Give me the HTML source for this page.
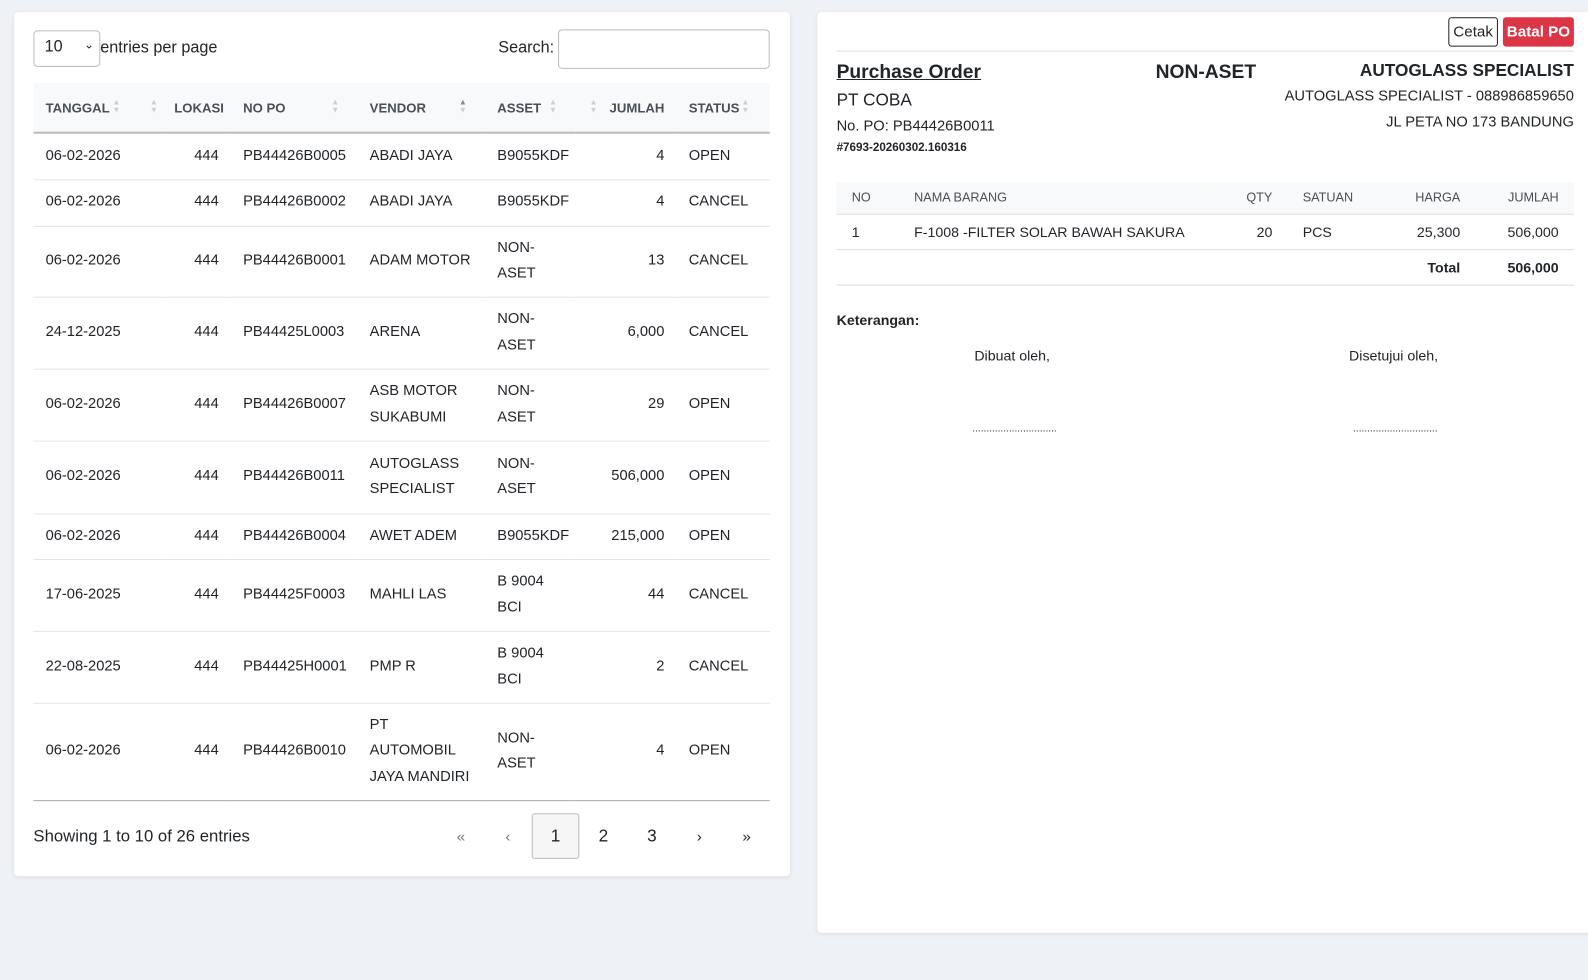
<!DOCTYPE html>
<html><head><meta charset="utf-8"><style>
*{box-sizing:border-box;margin:0;padding:0}
html,body{width:1588px;height:980px;overflow:hidden}
body{background:#eef1f6;font-family:"Liberation Sans",sans-serif;color:#212529;font-size:14.5px}
#w{position:absolute;left:0;top:0;width:1568px;height:968px;transform:scale(1.0128);transform-origin:0 0}
.card{position:absolute;background:#fff;border-radius:4px;box-shadow:0 1px 4px rgba(0,0,0,.08)}
.a{position:absolute;white-space:nowrap}
table.t{position:absolute;left:33px;top:82px;width:727px;border-collapse:collapse;table-layout:fixed}
.t th{height:49px;background:#f8f9fa;color:#495057;font-size:13px;font-weight:bold;text-align:left;padding:0 12px;border-bottom:2px solid #bbb;position:relative}
.t td{padding:0 12px;line-height:25.5px;border-bottom:1px solid #e3e5e8;vertical-align:middle;font-size:14.5px}
.r{text-align:right!important}
.s{position:absolute;top:15px;font-size:8px;line-height:8px;color:#ccd0d4}
.it{position:absolute;left:826px;top:180px;width:728px;border-collapse:collapse;font-size:14px;white-space:nowrap}
.it th{background:#f8f9fa;height:31px;font-size:12.5px;color:#495057;font-weight:normal;text-align:left;padding:0 15px;border-bottom:1px solid #ddd}
.it td{height:35px;padding:0 15px;border-bottom:1px solid #ddd}
</style></head><body><div id="w">
<div class="card" style="left:14px;top:12px;width:766px;height:853px"></div>
<div class="a" style="left:33px;top:30px;width:66px;height:36px;border:1px solid #bbb;border-radius:4px;padding:7px 10px;font-size:16px">10<span style="position:absolute;right:5px;top:6px;font-size:12px">&#8964;</span></div>
<div class="a" style="left:99px;top:39px;font-size:16px">entries per page</div>
<div class="a" style="left:492px;top:39px;font-size:16px">Search:</div>
<div class="a" style="left:551px;top:29px;width:209px;height:39px;border:1px solid #bbb;border-radius:4px"></div>
<table class="t">
<colgroup><col style="width:127px"><col style="width:68px"><col style="width:125px"><col style="width:126px"><col style="width:89px"><col style="width:100px"><col style="width:92px"></colgroup>
<tr><th>TANGGAL<span class="s" style="left:78px">▲<br>▼</span></th><th class="r">LOKASI<span class="s" style="left:-12px">▲<br>▼</span></th><th>NO PO<span class="s" style="right:18px">▲<br>▼</span></th><th>VENDOR<span class="s" style="right:18px"><span style="color:#888">▲</span><br>▼</span></th><th>ASSET<span class="s" style="left:63px">▲<br>▼</span></th><th class="r">JUMLAH<span class="s" style="left:14px">▲<br>▼</span></th><th>STATUS<span class="s" style="left:64px">▲<br>▼</span></th></tr>
<tr style="height:46px"><td>06-02-2026</td><td class="r">444</td><td>PB44426B0005</td><td>ABADI JAYA</td><td>B9055KDF</td><td class="r">4</td><td>OPEN</td></tr>
<tr style="height:46px"><td>06-02-2026</td><td class="r">444</td><td>PB44426B0002</td><td>ABADI JAYA</td><td>B9055KDF</td><td class="r">4</td><td>CANCEL</td></tr>
<tr style="height:70px"><td>06-02-2026</td><td class="r">444</td><td>PB44426B0001</td><td>ADAM MOTOR</td><td>NON-<br>ASET</td><td class="r">13</td><td>CANCEL</td></tr>
<tr style="height:71px"><td>24-12-2025</td><td class="r">444</td><td>PB44425L0003</td><td>ARENA</td><td>NON-<br>ASET</td><td class="r">6,000</td><td>CANCEL</td></tr>
<tr style="height:71px"><td>06-02-2026</td><td class="r">444</td><td>PB44426B0007</td><td>ASB MOTOR<br>SUKABUMI</td><td>NON-<br>ASET</td><td class="r">29</td><td>OPEN</td></tr>
<tr style="height:72px"><td>06-02-2026</td><td class="r">444</td><td>PB44426B0011</td><td>AUTOGLASS<br>SPECIALIST</td><td>NON-<br>ASET</td><td class="r">506,000</td><td>OPEN</td></tr>
<tr style="height:45px"><td>06-02-2026</td><td class="r">444</td><td>PB44426B0004</td><td>AWET ADEM</td><td>B9055KDF</td><td class="r">215,000</td><td>OPEN</td></tr>
<tr style="height:71px"><td>17-06-2025</td><td class="r">444</td><td>PB44425F0003</td><td>MAHLI LAS</td><td>B 9004<br>BCI</td><td class="r">44</td><td>CANCEL</td></tr>
<tr style="height:71px"><td>22-08-2025</td><td class="r">444</td><td>PB44425H0001</td><td>PMP R</td><td>B 9004<br>BCI</td><td class="r">2</td><td>CANCEL</td></tr>
<tr style="height:96px"><td style="border-bottom:1px solid #aaa">06-02-2026</td><td class="r" style="border-bottom:1px solid #aaa">444</td><td style="border-bottom:1px solid #aaa">PB44426B0010</td><td style="border-bottom:1px solid #aaa">PT<br>AUTOMOBIL<br>JAYA MANDIRI</td><td style="border-bottom:1px solid #aaa">NON-<br>ASET</td><td class="r" style="border-bottom:1px solid #aaa">4</td><td style="border-bottom:1px solid #aaa">OPEN</td></tr>
</table>
<div class="a" style="left:33px;top:817px;font-size:16.5px">Showing 1 to 10 of 26 entries</div>
<div class="a" style="left:451px;top:818px;font-size:15px;color:#777">«</div>
<div class="a" style="left:499px;top:818px;font-size:15px;color:#777">‹</div>
<div class="a" style="left:525px;top:803px;width:47px;height:45px;border:1px solid #bbb;border-radius:3px;background:#f6f6f6;text-align:center;line-height:43px;font-size:17px">1</div>
<div class="a" style="left:591px;top:816px;font-size:17px">2</div>
<div class="a" style="left:639px;top:816px;font-size:17px">3</div>
<div class="a" style="left:688px;top:818px;font-size:15px">›</div>
<div class="a" style="left:733px;top:818px;font-size:15px">»</div>

<div class="card" style="left:807px;top:12px;width:800px;height:909px"></div>
<div class="a" style="left:1430px;top:17px;width:49px;height:29px;border:1px solid #222;border-radius:3px;text-align:center;line-height:27px;font-size:15px">Cetak</div>
<div class="a" style="left:1484px;top:17px;width:70px;height:29px;background:#dc3545;color:#fff;border-radius:3px;text-align:center;line-height:29px;font-size:15px;font-weight:bold">Batal PO</div>
<div class="a" style="left:826px;top:50px;width:728px;border-top:1px solid #ddd"></div>
<div class="a" style="left:826px;top:61px;font-size:19px;font-weight:bold;text-decoration:underline">Purchase Order</div>
<div class="a" style="left:1141px;top:61px;font-size:19px;font-weight:bold">NON-ASET</div>
<div class="a" style="right:14px;top:60px;font-size:17px;font-weight:bold">AUTOGLASS SPECIALIST</div>
<div class="a" style="left:826px;top:89px;font-size:17px">PT COBA</div>
<div class="a" style="right:14px;top:87px;font-size:14.5px">AUTOGLASS SPECIALIST - 088986859650</div>
<div class="a" style="right:14px;top:113px;font-size:14.5px">JL PETA NO 173 BANDUNG</div>
<div class="a" style="left:826px;top:117px;font-size:14.5px">No. PO: PB44426B0011</div>
<div class="a" style="left:826px;top:140px;font-size:11.5px;font-weight:bold">#7693-20260302.160316</div>
<table class="it">
<tr><th style="width:63px">NO</th><th>NAMA BARANG</th><th class="r" style="width:90px">QTY</th><th style="width:89px">SATUAN</th><th class="r" style="width:100px">HARGA</th><th class="r" style="width:99px">JUMLAH</th></tr>
<tr><td>1</td><td>F-1008 -FILTER SOLAR BAWAH SAKURA</td><td class="r">20</td><td>PCS</td><td class="r">25,300</td><td class="r">506,000</td></tr>
<tr><td></td><td></td><td></td><td></td><td class="r" style="font-weight:bold">Total</td><td class="r" style="font-weight:bold">506,000</td></tr>
</table>
<div class="a" style="left:826px;top:308px;font-size:14px;font-weight:bold">Keterangan:</div>
<div class="a" style="left:962px;top:343px;font-size:14px">Dibuat oleh,</div>
<div class="a" style="left:1332px;top:343px;font-size:14px">Disetujui oleh,</div>
<div class="a" style="left:960px;top:418px;font-size:10px">..............................</div>
<div class="a" style="left:1336px;top:418px;font-size:10px">..............................</div>
</div></body></html>
